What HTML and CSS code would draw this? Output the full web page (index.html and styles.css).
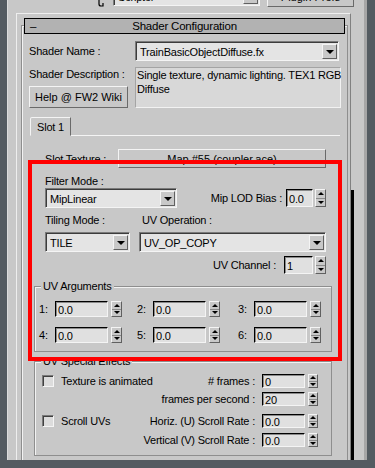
FILE: index.html
```html
<!DOCTYPE html>
<html lang="en">
<head>
  <meta charset="UTF-8">
  <title>Shader Configuration</title>
  <link rel="stylesheet" href="styles.css">
</head>
<body>
  <div class="screen">
    <div class="toprow">
      <svg class="pin" width="8" height="21" viewBox="0 0 8 21"><path d="M2 14 L2 18 Q2 20 4 20 L6 20 L6 17" fill="none" stroke="#000" stroke-width="1.2"/></svg>
      <div class="combo top-combo"><span class="combo-text">Scripter</span><span class="drop"></span></div>
      <button class="btn prefs">Plugin Prefs</button>
    </div>

    <div class="main">
      <div class="rollout">
        <div class="rgroup">
          <div class="rhead"><span class="minus">–</span><span>Shader Configuration</span><span></span></div>

          <div class="row row-name">
            <span class="lbl lbl-wide">Shader Name :</span>
            <div class="combo name-combo"><span class="combo-text">TrainBasicObjectDiffuse.fx</span><span class="drop"></span></div>
          </div>

          <div class="row row-desc">
            <div class="desc-left">
              <span class="lbl">Shader Description :</span>
              <button class="btn help">Help @ FW2 Wiki</button>
            </div>
            <div class="desc">Single texture, dynamic lighting. TEX1 RGB<br>Diffuse</div>
          </div>

          <div class="tabs">
            <div class="tab">Slot 1</div>
          </div>

          <div class="slot">
            <div class="row row-tex">
              <span class="lbl tex-lbl">Slot Texture :</span>
              <button class="btn map">Map #55 (coupler.ace)</button>
            </div>

            <div class="cap">Filter Mode :</div>
            <div class="row row-filter">
              <div class="combo filter-combo"><span class="combo-text">MipLinear</span><span class="drop"></span></div>
              <span class="lbl push">Mip LOD Bias :</span>
              <div class="edit lod">0.0</div>
              <div class="spin"><span class="up"></span><span class="dn"></span></div>
            </div>

            <div class="cap cap-two"><span class="tiling-lbl">Tiling Mode :</span><span>UV Operation :</span></div>
            <div class="row row-drop">
              <div class="combo tile-combo"><span class="combo-text">TILE</span><span class="drop"></span></div>
              <div class="combo uvop-combo"><span class="combo-text">UV_OP_COPY</span><span class="drop"></span></div>
            </div>

            <div class="row row-chan">
              <span class="lbl push">UV Channel :</span>
              <div class="edit chan">1</div>
              <div class="spin"><span class="up"></span><span class="dn"></span></div>
            </div>

            <div class="group args">
              <div class="legend">UV Arguments</div>
              <div class="arg-row first">
                <div class="arg"><span class="num">1:</span><div class="edit">0.0</div><div class="spin"><span class="up"></span><span class="dn"></span></div></div>
                <div class="arg"><span class="num">2:</span><div class="edit">0.0</div><div class="spin"><span class="up"></span><span class="dn"></span></div></div>
                <div class="arg"><span class="num">3:</span><div class="edit">0.0</div><div class="spin"><span class="up"></span><span class="dn"></span></div></div>
              </div>
              <div class="arg-row second">
                <div class="arg"><span class="num">4:</span><div class="edit">0.0</div><div class="spin"><span class="up"></span><span class="dn"></span></div></div>
                <div class="arg"><span class="num">5:</span><div class="edit">0.0</div><div class="spin"><span class="up"></span><span class="dn"></span></div></div>
                <div class="arg"><span class="num">6:</span><div class="edit">0.0</div><div class="spin"><span class="up"></span><span class="dn"></span></div></div>
              </div>
            </div>

            <div class="group effects">
              <div class="legend">UV Special Effects</div>
              <div class="fx-row fx1">
                <span class="check"></span><span class="check-lbl">Texture is animated</span>
                <span class="lbl push"># frames :</span>
                <div class="edit fx-edit">0</div>
                <div class="spin"><span class="up"></span><span class="dn"></span></div>
              </div>
              <div class="fx-row fx2">
                <span class="lbl push">frames per second :</span>
                <div class="edit fx-edit">20</div>
                <div class="spin"><span class="up"></span><span class="dn"></span></div>
              </div>
              <div class="fx-row fx3">
                <span class="check"></span><span class="check-lbl">Scroll UVs</span>
                <span class="lbl push">Horiz. (U) Scroll Rate :</span>
                <div class="edit fx-edit">0.0</div>
                <div class="spin"><span class="up"></span><span class="dn"></span></div>
              </div>
              <div class="fx-row fx4">
                <span class="lbl push">Vertical (V) Scroll Rate :</span>
                <div class="edit fx-edit">0.0</div>
                <div class="spin"><span class="up"></span><span class="dn"></span></div>
              </div>
            </div>
          </div>
        </div>
      </div>
      <div class="scroll"><div class="thumb"></div></div>
    </div>
  </div>

  <div class="marker"></div>
</body>
</html>
```

FILE: styles.css
```css
* {
  box-sizing: border-box;
}
body {
  margin: 0;
  height: 468px;
  overflow: hidden;
  position: relative;
  background: #545b61;
  font-family: "Liberation Sans", Arial, sans-serif;
  font-size: 11px;
  letter-spacing: -0.2px;
  color: #000;
}
.screen {
  margin-left: 7px;
  width: 360px;
  height: 460px;
  overflow: hidden;
  background: #c8c8c8;
  border-left: 1px solid #dcdcdc;
  border-right: 3px solid #a6a6a6;
}

/* top strip, mostly scrolled away */
.toprow {
  display: flex;
  height: 21px;
  margin-top: -14px;
}
.pin {
  margin-left: 89px;
}
.top-combo {
  margin-left: 8px;
  width: 147px;
}
.prefs {
  margin-left: 7px;
  width: 87px;
}

.main {
  display: flex;
  margin-top: 6px;
}
.rollout {
  margin-left: 8px;
  width: 335px;
  height: 520px;
  border: 1px solid;
  border-color: #eeeeee #808080 #808080 #eeeeee;
  padding: 11px 2px 0 4px;
}
.rgroup {
  width: 327px;
  height: 500px;
  border: 1px solid #8e8e8e;
  box-shadow: inset 1px 1px 0 #f2f2f2;
}
.rhead {
  display: grid;
  grid-template-columns: 1fr auto 1fr;
  align-items: center;
  height: 16px;
  margin: -8px 2px 0 2px;
  border: 1px solid #000;
  background: #b2b2b2;
  font-size: 11.5px;
}
.minus {
  padding-left: 5px;
}
.scroll {
  width: 3px;
  margin-left: 0;
}
.thumb {
  width: 3px;
  height: 300px;
  margin-top: 177px;
  background: #000;
}

/* generic controls */
.row {
  display: flex;
  align-items: center;
}
.lbl {
  white-space: nowrap;
  line-height: 14px;
}
.push {
  margin-left: auto;
}
.btn {
  background: #c8c8c8;
  border: 1px solid;
  border-color: #f4f4f4 #6a6a6a #6a6a6a #f4f4f4;
  font: inherit;
  color: #000;
  padding: 0;
  text-align: center;
  white-space: nowrap;
}
.combo {
  display: flex;
  align-items: center;
  height: 20px;
  border: 1px solid;
  border-color: #7a7a7a #f4f4f4 #f4f4f4 #7a7a7a;
  box-shadow: inset 1px 1px 0 #3c3c3c;
  background: #e4e4e4;
  padding: 2px 1px 1px 4px;
}
.combo-text {
  flex: 1;
  white-space: nowrap;
  overflow: hidden;
}
.drop {
  display: flex;
  align-items: center;
  justify-content: center;
  width: 15px;
  height: 15px;
  background: #c8c8c8;
  border: 1px solid;
  border-color: #f4f4f4 #606060 #606060 #f4f4f4;
}
.drop::after {
  content: "";
  border-left: 4px solid transparent;
  border-right: 4px solid transparent;
  border-top: 4px solid #000;
  margin-top: 1px;
}
.edit {
  display: flex;
  align-items: center;
  height: 16px;
  border: 1px solid;
  border-color: #000 #f4f4f4 #f4f4f4 #000;
  box-shadow: inset 1px 1px 0 #8a8a8a;
  background: #e0e0e0;
  padding: 1px 0 0 2px;
  white-space: nowrap;
}
.spin {
  display: flex;
  flex-direction: column;
  width: 11px;
  height: 16px;
  margin-left: 3px;
  background: #c8c8c8;
  border: 1px solid;
  border-color: #f4f4f4 #606060 #606060 #f4f4f4;
}
.spin span {
  flex: 1;
  display: flex;
  align-items: center;
  justify-content: center;
}
.spin .up {
  border-bottom: 1px solid #8a8a8a;
}
.spin .up::after {
  content: "";
  border-left: 3px solid transparent;
  border-right: 3px solid transparent;
  border-bottom: 3px solid #000;
}
.spin .dn::after {
  content: "";
  border-left: 3px solid transparent;
  border-right: 3px solid transparent;
  border-top: 3px solid #000;
}
.check {
  width: 12px;
  height: 12px;
  flex: none;
  border: 1px solid;
  border-color: #7a7a7a #f4f4f4 #f4f4f4 #7a7a7a;
  box-shadow: inset 1px 1px 0 #404040;
  background: #dcdcdc;
}
.check-lbl {
  margin-left: 7px;
  white-space: nowrap;
}

/* shader rows */
.row-name {
  height: 20px;
  margin-top: 7px;
  padding-left: 7px;
}
.lbl-wide {
  width: 106px;
}
.name-combo {
  width: 204px;
}
.row-desc {
  align-items: stretch;
  height: 41px;
  margin-top: 6px;
  padding-left: 7px;
}
.desc-left {
  display: flex;
  flex-direction: column;
  justify-content: space-between;
  width: 106px;
}
.help {
  width: 99px;
  height: 22px;
}
.desc {
  width: 206px;
  border: 1px solid;
  border-color: #a4a4a4 #f2f2f2 #f2f2f2 #a4a4a4;
  background: #d8d8d8;
  padding: 0 0 0 1px;
  line-height: 14px;
  white-space: nowrap;
}

/* tab strip */
.tabs {
  display: flex;
  width: 310px;
  height: 19px;
  margin: 9px 0 0 8px;
  border-bottom: 1px solid #f4f4f4;
}
.tab {
  width: 41px;
  height: 19px;
  margin-bottom: -1px;
  background: #c8c8c8;
  border: 1px solid;
  border-color: #f4f4f4 #6a6a6a transparent #f4f4f4;
  border-radius: 2px 0 0 0;
  padding: 2px 0 0 6px;
  line-height: 14px;
}

/* slot panel */
.row-tex,
.cap,
.row-filter,
.row-drop,
.row-chan {
  padding-left: 23px;
}
.row-tex {
  height: 19px;
  margin-top: 13px;
}
.tex-lbl {
  width: 73px;
}
.map {
  width: 208px;
  height: 19px;
}
.cap {
  display: flex;
  height: 14px;
  line-height: 14px;
  margin-top: 6px;
}
.cap-two {
  margin-top: 5px;
}
.tiling-lbl {
  width: 97px;
}
.row-filter {
  width: 304px;
  height: 20px;
}
.filter-combo {
  width: 132px;
}
.row-filter .lbl,
.row-chan .lbl {
  margin-right: 4px;
}
.lod {
  width: 27px;
  height: 18px;
}
.row-filter .spin,
.row-chan .spin {
  height: 18px;
  margin-left: 2px;
}
.row-drop {
  height: 20px;
  margin-top: 5px;
}
.tile-combo {
  width: 85px;
}
.uvop-combo {
  width: 187px;
  margin-left: 9px;
}
.row-chan {
  width: 304px;
  height: 18px;
  margin-top: 4px;
}
.row-chan .lbl {
  margin-right: 8px;
}
.chan {
  width: 29px;
  height: 18px;
}

/* group boxes */
.group {
  width: 298px;
  margin-left: 12px;
  border: 1px solid #8e8e8e;
  box-shadow: inset 1px 1px 0 #f2f2f2;
  padding-bottom: 8px;
}
.legend {
  width: fit-content;
  margin: -8px 0 0 6px;
  padding: 0 2px;
  background: #c8c8c8;
  line-height: 14px;
}
.args {
  margin-top: 12px;
}
.arg-row {
  display: grid;
  grid-template-columns: 98px 101px 98px;
  padding-left: 4px;
}
.arg-row.first {
  margin-top: 8px;
}
.arg-row.second {
  margin-top: 10px;
}
.arg {
  display: flex;
  align-items: center;
}
.num {
  width: 16px;
}
.arg .edit {
  width: 53px;
}
.effects {
  margin-top: 9px;
}
.fx-row {
  display: flex;
  align-items: center;
  height: 14px;
  padding: 0 13px 0 7px;
}
.fx1 {
  margin-top: 6px;
}
.fx2 {
  margin-top: 4px;
}
.fx3 {
  margin-top: 8px;
}
.fx4 {
  margin-top: 5px;
}
.fx-row .lbl {
  margin-right: 7px;
}
.fx-edit {
  width: 43px;
  height: 14px;
}
.fx-row .spin {
  width: 10px;
  height: 14px;
}

/* red annotation drawn over the screenshot */
.marker {
  position: absolute;
  left: 28px;
  top: 160px;
  width: 314px;
  height: 201px;
  border: 4px solid #ff0000;
}
```
